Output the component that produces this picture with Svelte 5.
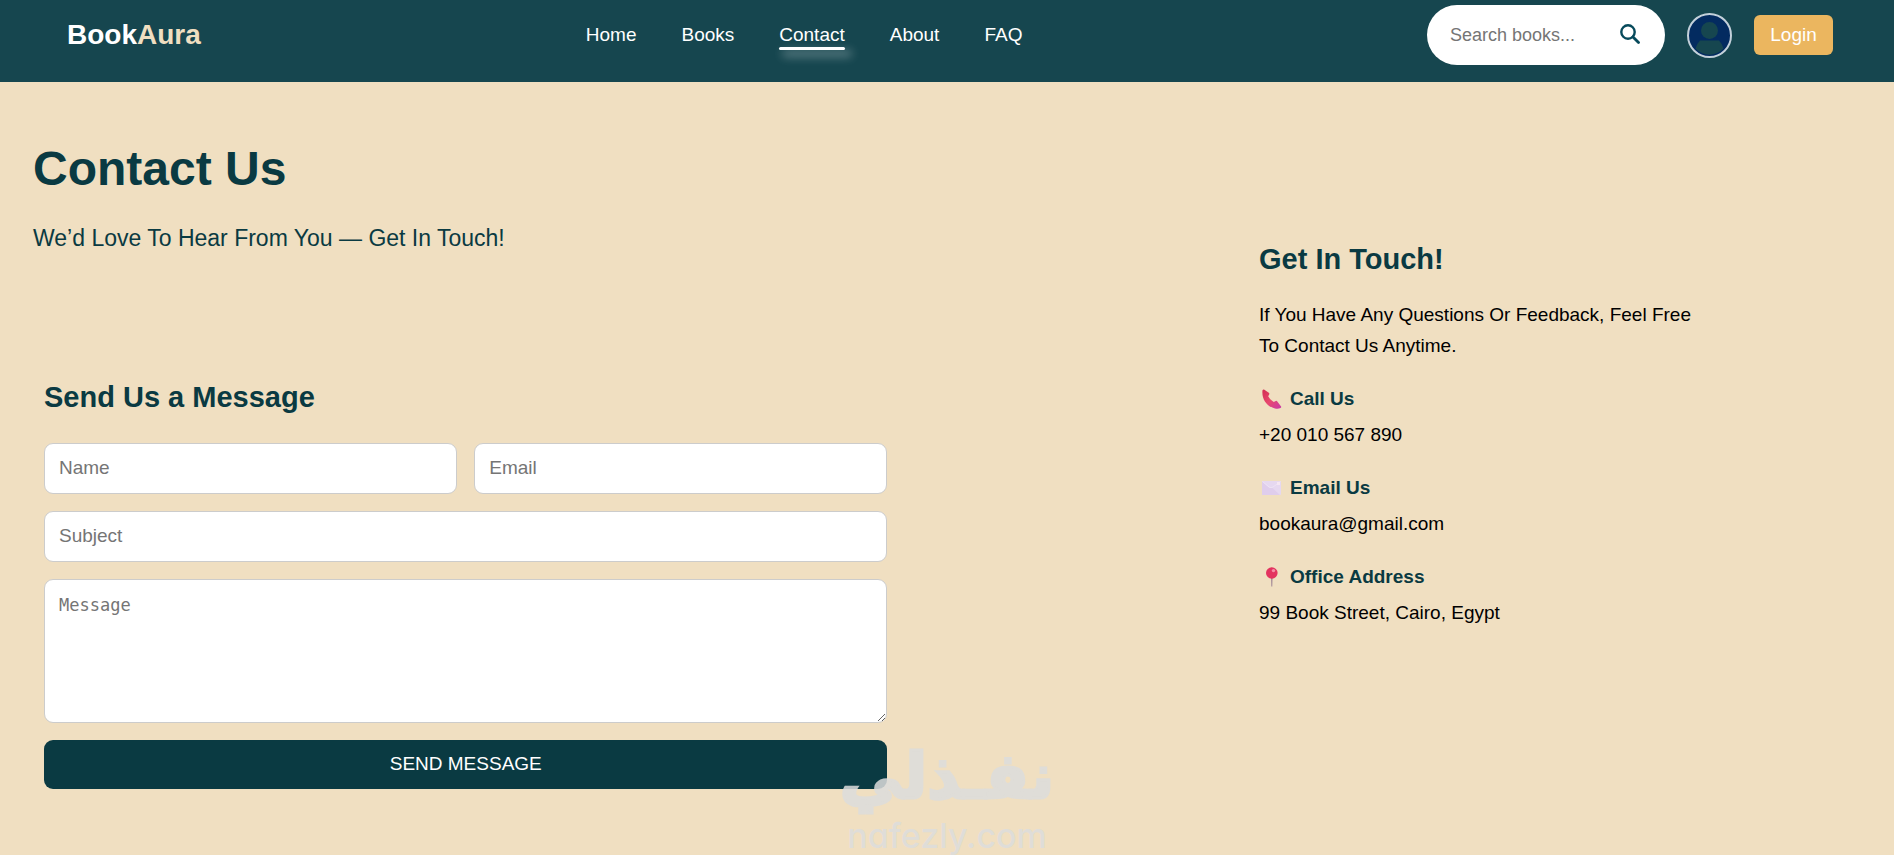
<script>
  const links = ['Home', 'Books', 'Contact', 'About', 'FAQ'];
  const current = 'Contact';
</script>

<header>
  <a class="logo" href="#home">Book<span>Aura</span></a>
  <nav>
    {#each links as link}
      <a href={'#' + link.toLowerCase()} class:active={link === current}>{link}</a>
    {/each}
  </nav>
  <div class="tools">
    <form class="search">
      <input type="search" placeholder="Search books..." aria-label="Search books" />
      <button type="button" aria-label="Search">
        <svg viewBox="0 0 20 20" width="20" height="20" fill="none" stroke="#074a5b" stroke-linecap="round"><circle cx="8" cy="8" r="6.700" stroke-width="2.400" /><path d="m13 13 5.500 5.500" stroke-width="2.800" /></svg>
      </button>
    </form>
    <a class="avatar" href="#profile" aria-label="Profile">
      <svg viewBox="0 0 45 45" width="45" height="45">
        <circle cx="22.500" cy="22.500" r="21.500" fill="#032b60" stroke="#c3d0da" stroke-width="2" />
        <circle cx="22.500" cy="17.500" r="8.500" fill="#16464f" />
        <path fill="#16464f" d="M8.500 35.500q1.500-5 4.500-8h19q3 3 4.500 8a19 19 0 0 1-28 0z" />
      </svg>
    </a>
    <button class="login" type="button">Login</button>
  </div>
</header>

<main>
  <div class="left">
    <h1>Contact Us</h1>
    <p class="lead">We’d Love To Hear From You — Get In Touch!</p>
    <form class="message">
      <h2>Send Us a Message</h2>
      <div class="pair">
        <input type="text" placeholder="Name" aria-label="Name" />
        <input type="email" placeholder="Email" aria-label="Email" />
      </div>
      <input type="text" placeholder="Subject" aria-label="Subject" />
      <textarea placeholder="Message" aria-label="Message"></textarea>
      <button type="button">SEND MESSAGE</button>
    </form>
  </div>

  <section class="info">
    <h2>Get In Touch!</h2>
    <p>If You Have Any Questions Or Feedback, Feel Free To Contact Us Anytime.</p>
    <h3>
      <svg viewBox="0 0 26 24" width="26" height="24">
        <defs><linearGradient id="phone" x1="0" y1="0" x2="1" y2="1"><stop offset="0" stop-color="#d22b52" /><stop offset="0.500" stop-color="#e8486e" /><stop offset="1" stop-color="#c938a8" /></linearGradient></defs>
        <path fill="url(#phone)" d="M3.500 3.300Q4 2.300 5 2.500l4.800 3.300q.9.700.4 1.600L9.200 9.200q2 3.700 5.600 5.700l1.900-1q1-.4 1.600.5l3.800 5q.5 1.200-.6 1.700-2.500 1-5.500.3C7.500 19.500 2.500 11.500 3.500 3.300z" />
      </svg>
      Call Us
    </h3>
    <p>+20 010 567 890</p>
    <h3>
      <svg viewBox="0 0 26 24" width="26" height="24">
        <rect x="3" y="5" width="19" height="14" rx="1" fill="#e6d8f0" />
        <path d="M3 5.500v13.500h18l-8-7.500q-1.500 1-3 0z" fill="#dfcdec" />
        <path d="M3.500 5.500 10 11q2 1.500 4 0l7.500-5.500" fill="none" stroke="#eee3f5" />
        <rect x="18" y="6" width="3" height="3" fill="#f5e6f2" />
      </svg>
      Email Us
    </h3>
    <p>bookaura@gmail.com</p>
    <h3>
      <svg viewBox="0 0 26 24" width="26" height="24">
        <path d="M12 12h1.600l-.3 9.500h-1z" fill="#a58c98" />
        <circle cx="12.800" cy="8" r="5.800" fill="#e3335f" />
        <circle cx="14.500" cy="5.600" r="1.700" fill="#f58ba5" />
      </svg>
      Office Address
    </h3>
    <p>99 Book Street, Cairo, Egypt</p>
  </section>
</main>

<div class="watermark">
  <span class="arabic" lang="ar" dir="rtl">نفـذلي</span>
  <span class="latin">nafezly.com</span>
</div>

<style>
  :global(body) {
    background: #f0dfc1;
    font-family: "Liberation Sans", Arial, sans-serif;
    font-size: 19px;
    color: #000;
  }
  :global(#app) {
    position: relative;
  }
  header {
    display: grid;
    grid-template-columns: 16fr auto 25fr;
    align-items: center;
    padding: 5px 61px 17px 67px;
    background: #16464f;
  }
  a {
    color: #fff;
    text-decoration: none;
  }
  .logo {
    font-size: 28px;
    font-weight: bold;
    line-height: 32px;
  }
  .logo span {
    color: #f0dfc1;
  }
  nav {
    display: flex;
    gap: 45px;
    line-height: 30px;
  }
  nav a {
    position: relative;
  }
  nav a.active::after {
    content: "";
    position: absolute;
    left: 0;
    right: 0;
    bottom: 0;
    height: 3px;
    border-radius: 2px;
    background: #fff;
    box-shadow: 5px 5px 10px 2px rgba(255, 255, 255, 0.3);
  }
  .tools {
    display: flex;
    justify-content: flex-end;
    align-items: center;
    gap: 22px;
  }
  input,
  textarea,
  button {
    box-sizing: border-box;
    font: inherit;
  }
  input::placeholder,
  textarea::placeholder {
    color: #757575;
  }
  .search {
    display: flex;
    align-items: center;
    box-sizing: border-box;
    width: 238px;
    height: 60px;
    padding: 0 25px 0 23px;
    border-radius: 30px;
    background: #fff;
  }
  .search input {
    flex: 1;
    min-width: 0;
    padding: 0;
    border: 0;
    outline: 0;
    background: none;
    font-size: 18px;
  }
  .search button {
    display: flex;
    padding: 0 0 2px;
    border: 0;
    background: none;
  }
  .avatar {
    display: flex;
  }
  .login {
    min-width: 79px;
    height: 40px;
    padding: 0 16px;
    border: 0;
    border-radius: 6px;
    background: #ebb65f;
    color: #fff;
  }
  main {
    display: grid;
    grid-template-columns: 1226fr 635fr;
    padding: 58px 0 66px 33px;
  }
  h1,
  h2,
  h3 {
    margin: 0;
    color: #0a3a42;
  }
  h1 {
    font-size: 48px;
    line-height: 58px;
  }
  .lead {
    margin: 26px 0 0;
    font-size: 23px;
    line-height: 28px;
    color: #0a3a42;
  }
  h2 {
    font-size: 29px;
    line-height: 34px;
  }
  .message {
    display: flex;
    flex-direction: column;
    gap: 17px;
    width: 68.8%;
    margin: 128px 0 0 11px;
  }
  .message h2 {
    margin-bottom: 12px;
  }
  .pair {
    display: grid;
    grid-template-columns: 1fr 1fr;
    gap: 17px;
  }
  .message input,
  textarea {
    width: 100%;
    height: 51px;
    padding: 0 14px 2px;
    border: 1px solid #ccc;
    border-radius: 9px;
    background: #fff;
  }
  textarea {
    display: block;
    height: 144px;
    padding: 15px 14px;
    font-family: "DejaVu Sans Mono", monospace;
    font-size: 17px;
    resize: vertical;
  }
  .message button {
    height: 49px;
    padding: 0 0 2px;
    border: 0;
    border-radius: 9px;
    background: #0a3a42;
    color: #fff;
  }
  .info {
    max-width: 450px;
    padding-top: 102px;
  }
  .info p {
    margin: 0;
    line-height: 31px;
  }
  .info h2 + p {
    margin-top: 23px;
  }
  h3 {
    display: flex;
    align-items: center;
    gap: 5px;
    margin: 24px 0 6px;
    font-size: 19px;
    line-height: 28px;
  }
  .watermark {
    position: absolute;
    left: 841px;
    bottom: 0;
    width: 212px;
    display: flex;
    flex-direction: column;
    align-items: center;
    color: #ddd;
    opacity: 0.85;
    pointer-events: none;
  }
  .arabic {
    margin-bottom: 3px;
    font: bold 63px/74px "DejaVu Sans", sans-serif;
    -webkit-text-stroke: 3px #ddd;
  }
  .latin {
    font: 500 34px/38px Inter, sans-serif;
    font-feature-settings: "cv11";
  }
</style>
